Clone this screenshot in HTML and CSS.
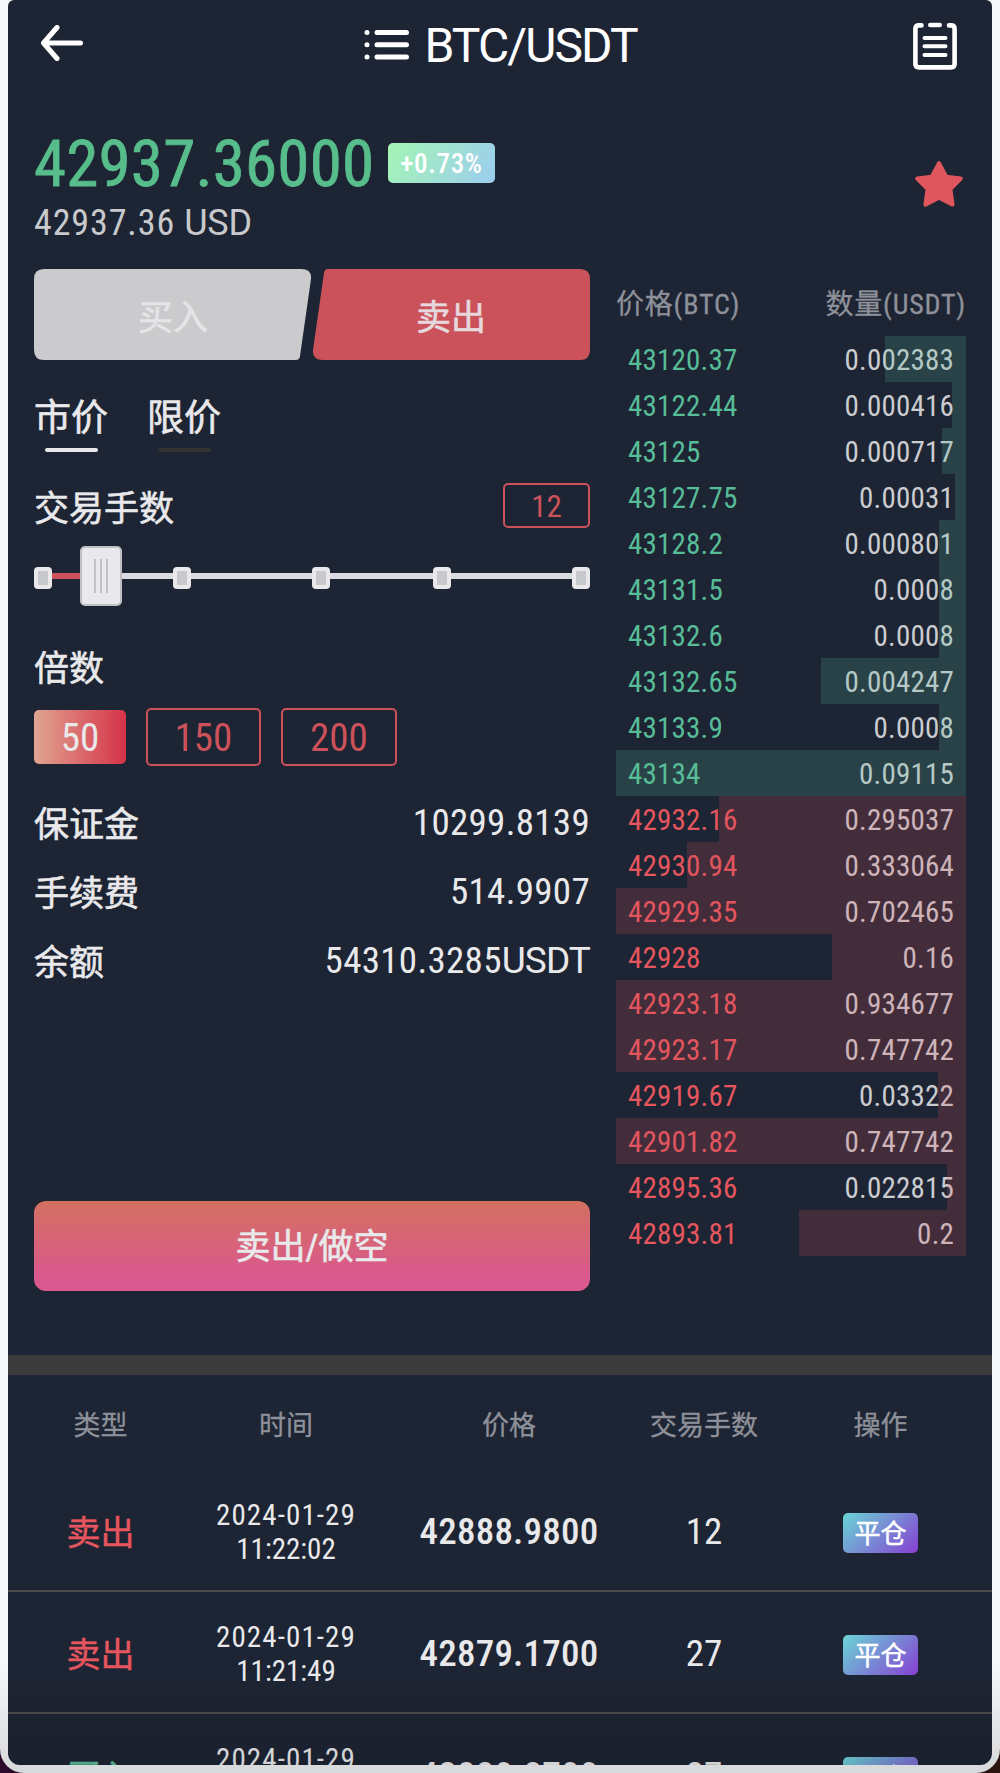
FILE: index.html
```html
<!DOCTYPE html>
<html lang="zh-CN">
<head>
    <meta charset="UTF-8">
    <meta name="viewport" content="width=device-width, initial-scale=1.0">
    <title>BTC/USDT</title>
    <link rel="stylesheet" href="styles.css">
</head>
<body>
    <div class="window">
        <div class="app">
            <header class="navbar">
                <svg class="icon-back" viewBox="0 0 42 36" fill="none" stroke="#fff" stroke-width="5" stroke-linecap="round" stroke-linejoin="round">
                    <path d="M16 2.5L2.5 18L16 33.5M3 18H39.5"/>
                </svg>
                <div class="title">
                    <svg class="icon-list" viewBox="0 0 46 32" fill="none" stroke="#fff" stroke-width="5" stroke-linecap="round">
                        <path d="M13 3.5H42.5M13 15.8H42.5M13 28.1H42.5M3 3.5h.01M3 15.8h.01M3 28.1h.01"/>
                    </svg>
                    <h1>BTC/USDT</h1>
                </div>
                <svg class="icon-orders" viewBox="0 0 44 48" fill="none" stroke="#fff" stroke-width="4.6" stroke-linecap="round">
                    <path d="M8.5 3.4H6Q2.4 3.4 2.4 7V42Q2.4 45.4 6 45.4H38Q41.6 45.4 41.6 42V7Q41.6 3.4 38 3.4H36M17.3 3H26.7"/>
                    <path stroke-width="4" d="M11.5 16H32.5M11.5 24.3H32.5M11.5 33H32.5"/>
                </svg>
            </header>

            <section class="quote">
                <div>
                    <div class="quote-top">
                        <span class="last-price">42937.36000</span>
                        <span class="change">+0.73%</span>
                    </div>
                    <div class="usd">42937.36 <span class="unit">USD</span></div>
                </div>
                <svg class="icon-star" viewBox="0 0 48 46" fill="#df565e" stroke="#df565e" stroke-width="4" stroke-linejoin="round">
                    <path d="M24 2.2L31.2 15.8L45.8 17.6L35.4 28.2L37.6 43.6L24 36.8L10.4 43.6L12.6 28.2L2.2 17.6L16.8 15.8Z"/>
                </svg>
            </section>

            <main class="trade">
                <section class="form">
                    <div class="side-tabs">
                        <svg class="side-shape" viewBox="0 0 556 91">
                            <path fill="#cbcbcd" d="M10 0H267Q278 0 277 10L266 87Q265.500 91 262 91H10Q0 91 0 81V10Q0 0 10 0Z"/>
                            <path fill="#cb525a" d="M294 0H546Q556 0 556 10V81Q556 91 546 91H289Q278 91 279 81L290 4Q290.500 0 294 0Z"/>
                        </svg>
                        <span class="side-buy">买入</span>
                        <span class="side-sell">卖出</span>
                    </div>

                    <div class="type-tabs">
                        <span class="type active">市价</span>
                        <span class="type">限价</span>
                    </div>

                    <div class="lots">
                        <span class="label">交易手数</span>
                        <span class="lots-input">12</span>
                    </div>
                    <div class="slider">
                        <div class="track"><div class="track-fill" style="width: 12%"></div></div>
                        <i class="stop" style="left: 0"></i>
                        <i class="stop" style="left: 25%"></i>
                        <i class="stop" style="left: 50%"></i>
                        <i class="stop" style="left: 71.800%"></i>
                        <i class="stop" style="left: 96.800%"></i>
                        <div class="handle"><i></i><i></i><i></i></div>
                    </div>

                    <div class="label lever-label">倍数</div>
                    <div class="levers">
                        <span class="lever active">50</span>
                        <span class="lever">150</span>
                        <span class="lever">200</span>
                    </div>

                    <div class="info"><span class="label">保证金</span><b>10299.8139</b></div>
                    <div class="info"><span class="label">手续费</span><b>514.9907</b></div>
                    <div class="info"><span class="label">余额</span><b>54310.3285<span class="unit">USDT</span></b></div>

                    <button class="submit">卖出/做空</button>
                </section>

                <section class="book">
                    <div class="book-head"><span>价格(BTC)</span><span>数量(USDT)</span></div>
                    <div class="order ask"><span>43120.37</span><em>0.002383</em><i style="width: 81px"></i></div>
                    <div class="order ask"><span>43122.44</span><em>0.000416</em><i style="width: 14px"></i></div>
                    <div class="order ask"><span>43125</span><em>0.000717</em><i style="width: 24px"></i></div>
                    <div class="order ask"><span>43127.75</span><em>0.00031</em><i style="width: 11px"></i></div>
                    <div class="order ask"><span>43128.2</span><em>0.000801</em><i style="width: 27px"></i></div>
                    <div class="order ask"><span>43131.5</span><em>0.0008</em><i style="width: 27px"></i></div>
                    <div class="order ask"><span>43132.6</span><em>0.0008</em><i style="width: 27px"></i></div>
                    <div class="order ask"><span>43132.65</span><em>0.004247</em><i style="width: 145px"></i></div>
                    <div class="order ask"><span>43133.9</span><em>0.0008</em><i style="width: 27px"></i></div>
                    <div class="order ask"><span>43134</span><em>0.09115</em><i style="width: 350px"></i></div>
                    <div class="order bid"><span>42932.16</span><em>0.295037</em><i style="width: 247px"></i></div>
                    <div class="order bid"><span>42930.94</span><em>0.333064</em><i style="width: 279px"></i></div>
                    <div class="order bid"><span>42929.35</span><em>0.702465</em><i style="width: 350px"></i></div>
                    <div class="order bid"><span>42928</span><em>0.16</em><i style="width: 134px"></i></div>
                    <div class="order bid"><span>42923.18</span><em>0.934677</em><i style="width: 350px"></i></div>
                    <div class="order bid"><span>42923.17</span><em>0.747742</em><i style="width: 350px"></i></div>
                    <div class="order bid"><span>42919.67</span><em>0.03322</em><i style="width: 28px"></i></div>
                    <div class="order bid"><span>42901.82</span><em>0.747742</em><i style="width: 350px"></i></div>
                    <div class="order bid"><span>42895.36</span><em>0.022815</em><i style="width: 19px"></i></div>
                    <div class="order bid"><span>42893.81</span><em>0.2</em><i style="width: 167px"></i></div>
                </section>
            </main>

            <section class="positions">
                <div class="row head">
                    <span>类型</span><span>时间</span><span>价格</span><span>交易手数</span><span>操作</span>
                </div>
                <div class="row">
                    <span class="kind sell">卖出</span>
                    <span class="time"><span class="date">2024-01-29</span><br>11:22:02</span>
                    <span class="price">42888.9800</span>
                    <span class="count">12</span>
                    <button class="close-btn">平仓</button>
                </div>
                <div class="row">
                    <span class="kind sell">卖出</span>
                    <span class="time"><span class="date">2024-01-29</span><br>11:21:49</span>
                    <span class="price">42879.1700</span>
                    <span class="count">27</span>
                    <button class="close-btn">平仓</button>
                </div>
                <div class="row">
                    <span class="kind buy">买入</span>
                    <span class="time"><span class="date">2024-01-29</span><br>11:21:30</span>
                    <span class="price">42880.8700</span>
                    <span class="count">27</span>
                    <button class="close-btn">平仓</button>
                </div>
            </section>
            <div class="fade"></div>
        </div>
    </div>
</body>
</html>
```
FILE: styles.css
```css
* {
    margin: 0;
    padding: 0;
    box-sizing: border-box;
}

body {
    height: 1773px;
    overflow: hidden;
    background: linear-gradient(to right, #2b0a2c, #2a150f);
    font-family: Roboto, "Noto Sans CJK SC", sans-serif;
    font-stretch: 75%;
    color: #e9e9eb;
}

i, em {
    font-style: normal;
}

/* Window frame around the app */
.window {
    height: 1773px;
    padding: 0 8px 8px;
    border-radius: 0 0 24px 24px;
    background: linear-gradient(to bottom, #f7f8fa 0, #f7f8fa 1660px, #d9dadb 1765px);
}

.app {
    position: relative;
    height: 1765px;
    overflow: hidden;
    border-radius: 6px 6px 12px 12px;
    background-color: #1d2433;
}

/* Top bar */
.navbar {
    display: flex;
    justify-content: space-between;
    align-items: flex-start;
    height: 87px;
    padding: 22px 35px 0 33px;
}

.icon-back {
    width: 42px;
    height: 36px;
    margin-top: 3px;
}

.title {
    display: flex;
    gap: 15px;
    margin-left: 5px;
}

.icon-list {
    width: 46px;
    height: 32px;
    margin-top: 7px;
}

.title h1 {
    width: 213px;
    font-size: 48px;
    font-weight: 400;
    font-stretch: 100%;
    letter-spacing: -1.9px;
    line-height: 47px;
    white-space: nowrap;
    color: #fff;
}

.icon-orders {
    width: 44px;
    height: 48px;
}

/* Last price */
.quote {
    display: flex;
    justify-content: space-between;
    height: 182px;
    padding: 40px 29px 0 26px;
}

.quote-top {
    display: flex;
    align-items: center;
    height: 72px;
    gap: 15px;
}

.last-price {
    width: 339px;
    padding-top: 2px;
    font-size: 65px;
    line-height: 72px;
    letter-spacing: 0.2px;
    color: #57bd8b;
    -webkit-text-stroke: 0.8px;
}

.change {
    width: 107px;
    height: 40px;
    border-radius: 5px;
    background: linear-gradient(120deg, #a4f5b4, #9ccdf0);
    color: #fff;
    font-size: 27px;
    font-weight: 500;
    letter-spacing: 0.7px;
    line-height: 43px;
    text-align: center;
}

.usd {
    font-size: 36px;
    letter-spacing: 0.9px;
    line-height: 49px;
    color: #c8c9cc;
}

.unit {
    font-stretch: 100%;
    letter-spacing: -0.3px;
}

.icon-star {
    width: 48px;
    height: 46px;
    margin-top: 34px;
}

/* Trade area */
.trade {
    display: flex;
    justify-content: space-between;
    height: 1086px;
    padding: 0 26px;
}

.form {
    width: 556px;
    font-size: 35px;
}

.label {
    position: relative;
    top: 2px;
    -webkit-text-stroke: 0.6px;
}

.side-tabs {
    position: relative;
    display: flex;
    height: 91px;
    line-height: 99px;
    text-align: center;
    -webkit-text-stroke: 0.6px;
}

.side-shape {
    position: absolute;
    left: 0;
    top: 0;
    width: 556px;
    height: 91px;
}

.side-tabs span {
    position: relative;
    flex: 1;
    color: #e6d9de;
}

.side-tabs .side-buy {
    color: #e5e5e8;
}

.type-tabs {
    display: flex;
    gap: 39px;
    padding-top: 33px;
    font-size: 37px;
    -webkit-text-stroke: 0.6px;
}

.type {
    display: flex;
    flex-direction: column;
    align-items: center;
    line-height: 52px;
}

.type::after {
    content: "";
    width: 53px;
    height: 4px;
    margin-top: 3px;
    border-radius: 2px;
    background-color: #333;
}

.type.active::after {
    background-color: #e9e9eb;
}

.lots {
    display: flex;
    justify-content: space-between;
    height: 45px;
    margin-top: 31px;
    line-height: 49px;
}

.lots-input {
    width: 87px;
    border: 2px solid #cb525a;
    border-radius: 5px;
    color: #cb525a;
    font-size: 31px;
    line-height: 44px;
    text-align: center;
}

/* Lots slider */
.slider {
    position: relative;
    height: 60px;
    margin-top: 18px;
    padding-top: 27px;
}

.track {
    height: 6px;
    background-color: #dadbde;
}

.track-fill {
    height: 6px;
    background-color: #cb525a;
}

.stop {
    position: absolute;
    top: 21px;
    width: 18px;
    height: 22px;
    border: 4px solid #e9e9eb;
    border-radius: 4px;
    background-color: #c8c9cb;
}

.handle {
    position: absolute;
    left: 46px;
    top: 0;
    display: flex;
    justify-content: center;
    align-items: center;
    gap: 4px;
    width: 42px;
    height: 60px;
    border: 2px solid #c0c0c3;
    border-radius: 5px;
    background-color: #e9e9eb;
}

.handle i {
    width: 2px;
    height: 34px;
    background-color: #c2c2c5;
}

/* Leverage */
.lever-label {
    margin-top: 36px;
    line-height: 52px;
}

.levers {
    display: flex;
    align-items: center;
    gap: 20px;
    height: 58px;
    margin-top: 14px;
}

.lever {
    width: 115px;
    height: 58px;
    border: 2px solid #cb525a;
    border-radius: 5px;
    color: #cb525a;
    font-size: 39px;
    line-height: 57px;
    text-align: center;
}

.lever:last-child {
    width: 116px;
}

.lever.active {
    width: 92px;
    height: 54px;
    border: none;
    background: linear-gradient(to right, #e0a591, #d63248);
    color: #e9e9eb;
}

.info {
    display: flex;
    justify-content: space-between;
    line-height: 69px;
}

.levers + .info {
    margin-top: 23px;
}

.info b {
    font-size: 37px;
    font-weight: 400;
    letter-spacing: 0.3px;
    line-height: 68px;
}

.info .unit {
    letter-spacing: -0.9px;
}

.submit {
    display: block;
    width: 556px;
    height: 90px;
    margin-top: 205px;
    padding-bottom: 6px;
    border: none;
    border-radius: 12px;
    background: linear-gradient(to bottom, #d47060, #d9588d 85%);
    color: #e9e9eb;
    font: inherit;
    -webkit-text-stroke: 0.6px;
}

/* Order book */
.book {
    width: 350px;
    font-size: 29px;
    letter-spacing: 0.2px;
}

.book-head {
    display: flex;
    justify-content: space-between;
    height: 67px;
    line-height: 72px;
    font-size: 28px;
    letter-spacing: 0.8px;
    color: #8e9199;
    -webkit-text-stroke: 0.3px;
}

.order {
    position: relative;
    display: flex;
    justify-content: space-between;
    height: 46px;
    padding: 0 12px;
    line-height: 49px;
}

.order em {
    color: #cbccd0;
}

.order i {
    position: absolute;
    right: 0;
    top: 0;
    height: 46px;
}

.ask span {
    color: #57bd98;
}

.bid span {
    color: #e5565e;
}

.ask i {
    background-color: rgba(88, 188, 155, 0.2);
}

.bid i {
    background-color: rgba(222, 86, 94, 0.2);
}

/* Open positions */
.positions {
    border-top: 20px solid #3b3b3b;
}

.row {
    display: grid;
    grid-template-columns: 185px 186px 260px 130px 223px;
    align-items: center;
    justify-items: center;
    height: 122px;
    padding-top: 3px;
    border-bottom: 2px solid #4b4b4b;
}

.row.head {
    height: 95px;
    padding-top: 1px;
    border: none;
    font-size: 27px;
    color: #8e9199;
    -webkit-text-stroke: 0.3px;
}

.kind {
    padding-top: 2px;
    font-size: 34px;
    line-height: 46px;
    -webkit-text-stroke: 0.5px;
}

.sell {
    color: #e5565e;
}

.buy {
    color: #57bd98;
}

.time {
    font-size: 29px;
    line-height: 34px;
    text-align: center;
}

.date {
    letter-spacing: 1.1px;
}

.price {
    font-size: 37px;
    font-weight: 500;
    letter-spacing: 0.2px;
}

.count {
    font-size: 37px;
}

.close-btn {
    width: 75px;
    height: 40px;
    margin-top: 3px;
    border: none;
    border-radius: 5px;
    background: linear-gradient(135deg, #6ad5d5, #863fd2);
    color: #fff;
    font-family: inherit;
    font-size: 26px;
    line-height: 42px;
    -webkit-text-stroke: 0.5px;
}

.fade {
    position: absolute;
    left: 0;
    right: 0;
    bottom: 0;
    height: 90px;
    background: linear-gradient(to bottom, transparent, rgba(0, 0, 0, 0.1));
}
```
